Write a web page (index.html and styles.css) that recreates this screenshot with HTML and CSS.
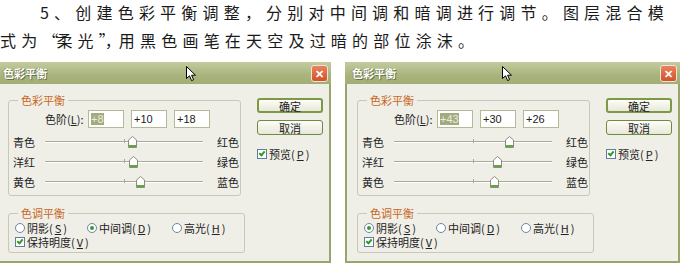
FILE: index.html
```html
<!DOCTYPE html>
<html lang="zh-CN">
<head>
    <meta charset="UTF-8">
    <title>色彩平衡调整</title>
    <link rel="stylesheet" href="styles.css">
</head>
<body>
    <p class="article"><span class="indent">5、创建色彩平衡调整，分别对中间调和暗调进行调节。图层混合模</span><br>式为<span class="q">“</span>柔光<span class="q">”</span><span class="q">，</span>用黑色画笔在天空及过暗的部位涂沫。</p>

    <div class="shots">
        <!-- midtones dialog -->
        <div class="dialog">
            <div class="titlebar">
                <span class="title">色彩平衡</span>
                <span class="close">&#10005;</span>
                <svg class="cursor cursor-a" width="11" height="16" viewBox="0 0 11 16"><path d="M0.5 0.5 L0.5 12.5 L3.5 9.8 L5.6 14.6 L7.6 13.7 L5.6 9.2 L9.5 9.2 Z" fill="#fff" stroke="#000"/></svg>
            </div>
            <div class="dlg-body">
                <div class="main-col">
                    <fieldset class="group">
                        <legend>色彩平衡</legend>
                        <div class="levels">
                            <span class="lvl-label">色阶(<u>L</u>):</span>
                            <span class="field"><span class="sel">+8</span></span>
                            <span class="field">+10</span>
                            <span class="field">+18</span>
                        </div>
                        <div class="slider-row">
                            <span class="lbl">青色</span>
                            <div class="track"><i class="tick"></i><svg class="thumb" style="left:87px" width="9" height="12" viewBox="0 0 9 12"><path d="M0.5 4 L4.5 0.5 L8.5 4 L8.5 11.5 L0.5 11.5 Z" fill="#fff" stroke="#8c8c80"/><rect x="1" y="9" width="7" height="2" fill="#5fa83a"/></svg></div>
                            <span class="lbl-r">红色</span>
                        </div>
                        <div class="slider-row">
                            <span class="lbl">洋红</span>
                            <div class="track"><i class="tick"></i><svg class="thumb" style="left:88px" width="9" height="12" viewBox="0 0 9 12"><path d="M0.5 4 L4.5 0.5 L8.5 4 L8.5 11.5 L0.5 11.5 Z" fill="#fff" stroke="#8c8c80"/><rect x="1" y="9" width="7" height="2" fill="#5fa83a"/></svg></div>
                            <span class="lbl-r">绿色</span>
                        </div>
                        <div class="slider-row">
                            <span class="lbl">黄色</span>
                            <div class="track"><i class="tick"></i><svg class="thumb" style="left:95px" width="9" height="12" viewBox="0 0 9 12"><path d="M0.5 4 L4.5 0.5 L8.5 4 L8.5 11.5 L0.5 11.5 Z" fill="#fff" stroke="#8c8c80"/><rect x="1" y="9" width="7" height="2" fill="#5fa83a"/></svg></div>
                            <span class="lbl-r">蓝色</span>
                        </div>
                    </fieldset>
                    <fieldset class="group">
                        <legend>色调平衡</legend>
                        <div class="radios">
                            <span class="radio"><i class="dot"></i>阴影(<u>S</u>)</span>
                            <span class="radio mid"><i class="dot on"></i>中间调(<u>D</u>)</span>
                            <span class="radio"><i class="dot"></i>高光(<u>H</u>)</span>
                        </div>
                        <span class="check"><i class="box"></i>保持明度(<u>V</u>)</span>
                    </fieldset>
                </div>
                <div class="side-col">
                    <button class="btn default">确定</button>
                    <button class="btn">取消</button>
                    <span class="check preview"><i class="box"></i>预览(<u>P</u>)</span>
                </div>
            </div>
        </div>

        <!-- shadows dialog -->
        <div class="dialog">
            <div class="titlebar">
                <span class="title">色彩平衡</span>
                <span class="close">&#10005;</span>
                <svg class="cursor cursor-b" width="11" height="16" viewBox="0 0 11 16"><path d="M0.5 0.5 L0.5 12.5 L3.5 9.8 L5.6 14.6 L7.6 13.7 L5.6 9.2 L9.5 9.2 Z" fill="#fff" stroke="#000"/></svg>
            </div>
            <div class="dlg-body">
                <div class="main-col">
                    <fieldset class="group">
                        <legend>色彩平衡</legend>
                        <div class="levels">
                            <span class="lvl-label">色阶(<u>L</u>):</span>
                            <span class="field"><span class="sel">+43</span></span>
                            <span class="field">+30</span>
                            <span class="field">+26</span>
                        </div>
                        <div class="slider-row">
                            <span class="lbl">青色</span>
                            <div class="track"><i class="tick"></i><svg class="thumb" style="left:115px" width="9" height="12" viewBox="0 0 9 12"><path d="M0.5 4 L4.5 0.5 L8.5 4 L8.5 11.5 L0.5 11.5 Z" fill="#fff" stroke="#8c8c80"/><rect x="1" y="9" width="7" height="2" fill="#5fa83a"/></svg></div>
                            <span class="lbl-r">红色</span>
                        </div>
                        <div class="slider-row">
                            <span class="lbl">洋红</span>
                            <div class="track"><i class="tick"></i><svg class="thumb" style="left:103px" width="9" height="12" viewBox="0 0 9 12"><path d="M0.5 4 L4.5 0.5 L8.5 4 L8.5 11.5 L0.5 11.5 Z" fill="#fff" stroke="#8c8c80"/><rect x="1" y="9" width="7" height="2" fill="#5fa83a"/></svg></div>
                            <span class="lbl-r">绿色</span>
                        </div>
                        <div class="slider-row">
                            <span class="lbl">黄色</span>
                            <div class="track"><i class="tick"></i><svg class="thumb" style="left:100px" width="9" height="12" viewBox="0 0 9 12"><path d="M0.5 4 L4.5 0.5 L8.5 4 L8.5 11.5 L0.5 11.5 Z" fill="#fff" stroke="#8c8c80"/><rect x="1" y="9" width="7" height="2" fill="#5fa83a"/></svg></div>
                            <span class="lbl-r">蓝色</span>
                        </div>
                    </fieldset>
                    <fieldset class="group">
                        <legend>色调平衡</legend>
                        <div class="radios">
                            <span class="radio"><i class="dot on"></i>阴影(<u>S</u>)</span>
                            <span class="radio mid"><i class="dot"></i>中间调(<u>D</u>)</span>
                            <span class="radio"><i class="dot"></i>高光(<u>H</u>)</span>
                        </div>
                        <span class="check"><i class="box"></i>保持明度(<u>V</u>)</span>
                    </fieldset>
                </div>
                <div class="side-col">
                    <button class="btn default">确定</button>
                    <button class="btn">取消</button>
                    <span class="check preview"><i class="box"></i>预览(<u>P</u>)</span>
                </div>
            </div>
        </div>
    </div>
</body>
</html>
```

FILE: styles.css
```css
body {
    margin: 0;
    background: #fff;
    font-family: "Noto Sans CJK SC", "Liberation Sans", sans-serif;
    overflow: hidden;
}

/* Article text above the screenshots */
.article {
    margin: -2px 0 0;
    font-size: 16px;
    line-height: 28px;
    letter-spacing: 5.2px;
    color: #1a1a1a;
    white-space: nowrap;
}

.indent {
    padding-left: 40px;
}

.q {
    letter-spacing: -2px;
}

/* Two dialogs side by side */
.shots {
    display: flex;
    gap: 14px;
    margin: 8px 0 0 -4px;
}

.dialog {
    width: 335px;
    height: 201px;
    box-sizing: border-box;
    display: flex;
    flex-direction: column;
    background: #efefe7;
    border: 2px solid #98a66d;
    border-top: none;
    font-size: 11px;
    color: #222;
    white-space: nowrap;
}

.titlebar {
    position: relative;
    height: 22px;
    margin: 0 -2px;
    padding: 0 3px 0 7px;
    display: flex;
    align-items: center;
    background: linear-gradient(#c3cb9f, #a8b47c 60%, #a1ae74);
}

.title {
    font-size: 11px;
    font-weight: bold;
    color: #fff;
    text-shadow: 1px 1px 0 #6b7548, -1px 0 0 #8a9461;
}

.close {
    margin-left: auto;
    width: 15px;
    height: 15px;
    border: 1px solid #f3e2d6;
    border-radius: 3px;
    background: linear-gradient(#e9835c, #d2512a);
    color: #fff;
    font-size: 11px;
    font-weight: bold;
    line-height: 15px;
    text-align: center;
}

.cursor {
    position: absolute;
    top: 4px;
}

.cursor-a {
    left: 190px;
}

.cursor-b {
    left: 157px;
}

.dlg-body {
    flex: 1;
    display: flex;
    gap: 16px;
    padding: 9px 6px 0 10px;
}

.main-col {
    width: 233px;
    display: flex;
    flex-direction: column;
    gap: 10px;
}

.group {
    margin: 0;
    padding: 0 0 3px 4px;
    border: 1px solid #c8c8b8;
    border-radius: 3px;
}

.group legend {
    margin-left: 5px;
    padding: 0 3px;
    font-size: 11px;
    line-height: 14px;
    color: #c8661f;
}

.levels {
    display: flex;
    align-items: center;
    gap: 7px;
    height: 18px;
    margin: 3px 0 4px;
    padding-left: 32px;
}

.lvl-label {
    width: 36px;
    flex: none;
}

.field {
    width: 32px;
    height: 16px;
    flex: none;
    padding-left: 2px;
    border: 1px solid #b3bb96;
    background: #fff;
    font-family: "Liberation Sans", sans-serif;
    font-size: 11px;
    line-height: 16px;
}

.sel {
    background: #a2ab80;
    color: #e9eddc;
}

.slider-row {
    display: flex;
    align-items: center;
    height: 20px;
}

.lbl {
    width: 32px;
}

.track {
    position: relative;
    width: 158px;
    height: 1px;
    background: #a9a99c;
    border-bottom: 1px solid #fff;
    margin-right: 14px;
}

.tick {
    position: absolute;
    left: 79px;
    top: -2px;
    width: 1px;
    height: 4px;
    background: #a9a99c;
}

.thumb {
    position: absolute;
    top: -5px;
    margin-left: -4px;
}

.radios {
    display: flex;
    align-items: center;
    height: 15px;
    padding-left: 2px;
}

.radio {
    display: flex;
    align-items: center;
    gap: 2px;
    width: 72px;
}

.radio.mid {
    width: 85px;
}

.dot {
    width: 8px;
    height: 8px;
    border: 1px solid #6b86a6;
    border-radius: 50%;
    background: #fff;
    position: relative;
}

.dot.on::after {
    content: "";
    position: absolute;
    left: 2px;
    top: 2px;
    width: 4px;
    height: 4px;
    border-radius: 50%;
    background: #3d9a2a;
}

.check {
    display: flex;
    align-items: center;
    gap: 2px;
    height: 14px;
    padding-left: 2px;
}

.box {
    position: relative;
    width: 8px;
    height: 8px;
    border: 1px solid #5f7d9c;
    background: #fff;
}

.box::after {
    content: "";
    position: absolute;
    left: 2px;
    top: 0;
    width: 2px;
    height: 4px;
    border: solid #2f9b25;
    border-width: 0 2px 2px 0;
    transform: rotate(40deg);
}

/* Buttons on the right */
.side-col {
    width: 66px;
    display: flex;
    flex-direction: column;
    padding-top: 5px;
}

.btn {
    height: 15px;
    margin-bottom: 7px;
    padding: 0;
    border: 1px solid #6f8a42;
    border-radius: 3px;
    background: linear-gradient(#fdfdf8, #e7e7da);
    font-family: inherit;
    font-size: 11px;
    line-height: 12px;
    color: #222;
}

.btn.default {
    border-width: 2px;
    border-color: #7c9a46;
}

.preview {
    margin-top: 5px;
    padding-left: 0;
}
```
